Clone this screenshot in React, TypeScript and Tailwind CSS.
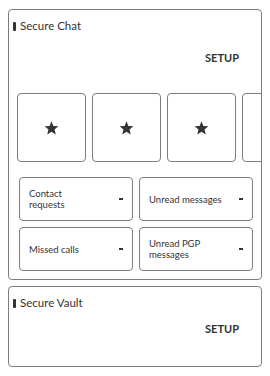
import React from "react";

const Star = () => (
  <svg width="15" height="14" viewBox="0 0 24 23" className="block">
    <path d="M12 0.5l3.1 7.6 8.2 0.6-6.3 5.3 2 8-7-4.4-7 4.4 2-8-6.3-5.3 8.2-0.6z" fill="#333" />
  </svg>
);

const Title = ({ text }: { text: string }) => (
  <div className="flex items-center pl-[4px] h-[16px]">
    <div className="w-[3px] h-[9px] rounded-[1px] bg-[#333]" />
    <span className="ml-[4px] text-[11.5px] leading-[16px] text-[#333]">{text}</span>
  </div>
);

const Stat = ({ label }: { label: React.ReactNode }) => (
  <div className="h-[44px] border border-[#7d7d7d] rounded-[4px] flex items-center justify-between pl-[9px] pr-[9px]">
    <span className="text-[9.5px] leading-[11px] text-[#333]">{label}</span>
    <span className="w-[4px] h-[2px] bg-[#333]" />
  </div>
);

export default function App() {
  return (
    <div className="w-[270px] h-[376px] bg-white px-[8px] pt-[9px]" style={{ fontFamily: 'Lato, "Noto Sans", sans-serif' }}>
      <div className="border border-[#7d7d7d] rounded-[4px] h-[271px] pt-[8px] overflow-hidden">
        <Title text="Secure Chat" />
        <div className="mt-[17px] pr-[22px] text-right text-[11px] leading-[14px] font-bold text-[#333]">SETUP</div>
        <div className="mt-[28px] flex gap-[6px] pl-[8px] overflow-hidden">
          {[0, 1, 2, 3].map((i) => (
            <div key={i} className="shrink-0 w-[69px] h-[69px] border border-[#7d7d7d] rounded-[4px] flex items-center justify-center">
              <Star />
            </div>
          ))}
        </div>
        <div className="mt-[15px] ml-[10px] mr-[8px] grid grid-cols-2 gap-x-[6px] gap-y-[6px]">
          <Stat label={<>Contact<br />requests</>} />
          <Stat label="Unread messages" />
          <Stat label="Missed calls" />
          <Stat label={<>Unread PGP<br />messages</>} />
        </div>
      </div>
      <div className="mt-[6px] border border-[#7d7d7d] rounded-[4px] h-[81px] pt-[8px]">
        <Title text="Secure Vault" />
        <div className="mt-[11px] pr-[22px] text-right text-[11px] leading-[14px] font-bold text-[#333]">SETUP</div>
      </div>
    </div>
  );
}
